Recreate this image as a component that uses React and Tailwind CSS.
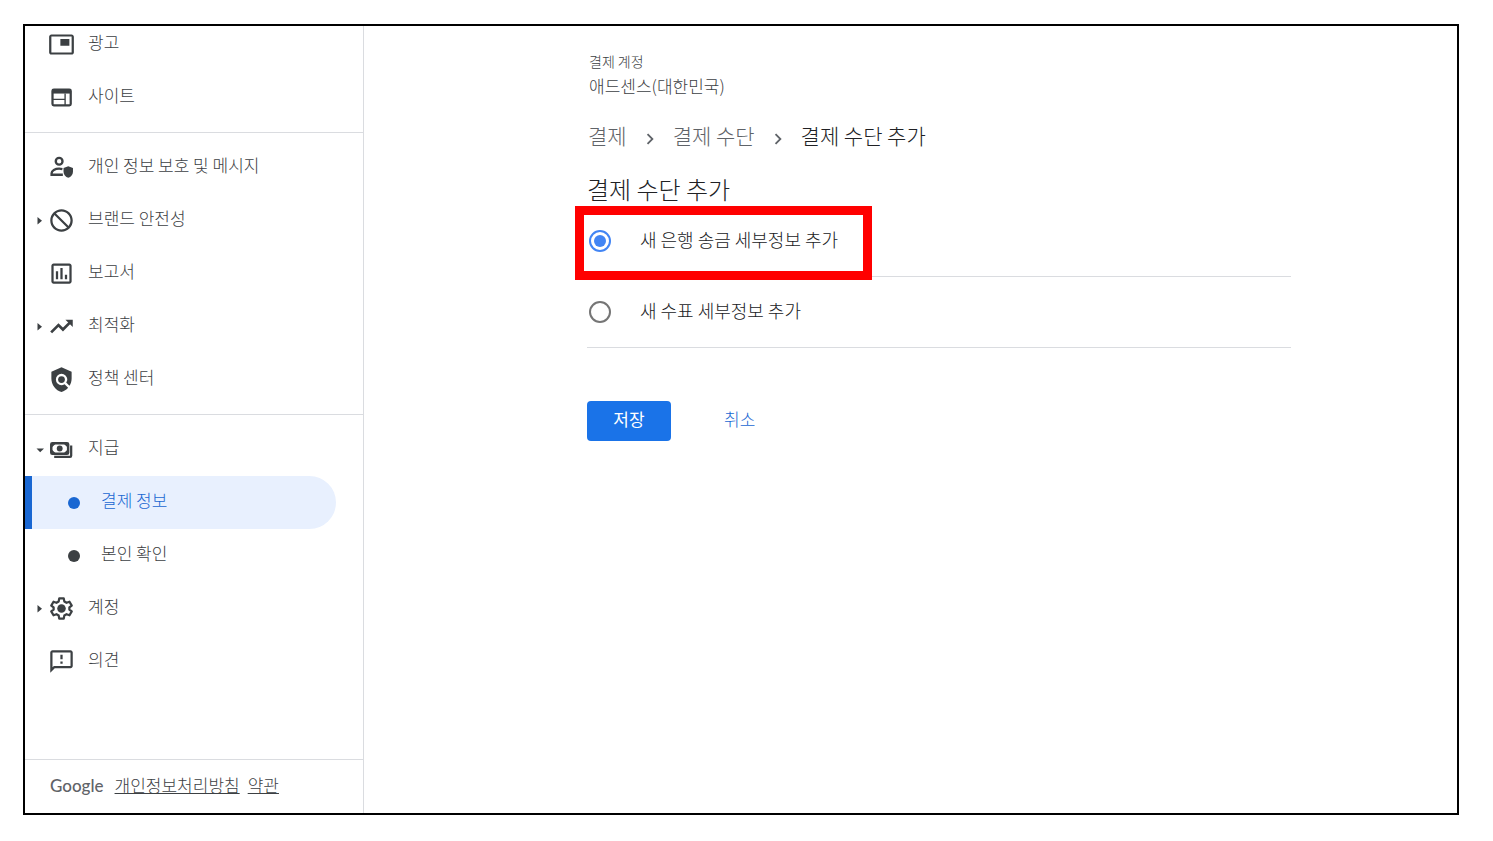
import { useState } from "react";
import {
  MdPictureInPicture,
  MdBlock,
  MdOutlineAssessment,
  MdPolicy,
  MdOutlineFeedback,
  MdChevronRight,
} from "react-icons/md";

function SitesIcon() {
  return (
    <svg viewBox="0 0 24 24" className="size-[27px]" fill="none" stroke="currentColor">
      <rect x="4" y="5" width="16.200" height="14" rx="1.200" strokeWidth="2" />
      <path d="M3.500 5h17v3.500h-17z" fill="currentColor" stroke="none" />
      <path d="M4 13.700h11M15.200 8.500v10.500" strokeWidth="1.200" />
    </svg>
  );
}

function PrivacyIcon() {
  return (
    <svg viewBox="0 0 24 24" className="size-[27px]" fill="none" stroke="currentColor">
      <circle cx="9.900" cy="6.500" r="3" strokeWidth="2.100" />
      <path d="M12.800 13.400c-.9-.2-1.800-.4-2.900-.4-3.600 0-6.700 1.700-6.700 4v1.400h10" strokeWidth="2.100" />
      <path d="M18 10.800l4.200 1.700v3.300c0 2.500-1.800 4.700-4.200 5.300-2.400-.6-4.200-2.800-4.200-5.300v-3.300z" fill="currentColor" stroke="none" />
    </svg>
  );
}

function TrendingIcon() {
  return (
    <svg viewBox="0 0 24 24" className="size-[27px]" fill="none" stroke="currentColor" strokeWidth="2.400">
      <path d="M2.800 17.200l6.500-6.500 4 4 7-7" />
      <path d="M15.500 6H22v6.500z" fill="currentColor" stroke="none" />
    </svg>
  );
}

function PaymentsIcon() {
  return (
    <svg viewBox="0 0 24 24" className="size-[27px]" fill="none" stroke="currentColor">
      <rect x="2.900" y="6.400" width="15" height="9.400" rx="1" strokeWidth="2.200" />
      <path d="M2.900 9.400l3-3M14.900 6.400l3 3M17.900 12.800l-3 3M5.900 15.800l-3-3" strokeWidth="1.800" />
      <circle cx="10.400" cy="11.100" r="2.600" fill="currentColor" stroke="none" />
      <path d="M20.600 8.500v9a1 1 0 0 1-1 1H5.500" strokeWidth="2" />
    </svg>
  );
}

function SettingsIcon() {
  return (
    <svg viewBox="0 0 24 24" className="size-[27px]" fill="none" stroke="currentColor" strokeWidth="2" strokeLinejoin="round">
      <path d="M10 3h4l.5 2.700 2 1.200 2.600-.9 2 3.400-2.100 1.700v1.800l2.100 1.700-2 3.400-2.600-.9-2 1.200L14 21h-4l-.5-2.700-2-1.200-2.600.9-2-3.400L5 12.900v-1.800L2.900 9.400l2-3.400 2.600.9 2-1.200z" />
      <circle cx="12" cy="12" r="3.800" fill="currentColor" stroke="none" />
    </svg>
  );
}

const groups = [
  [
    { label: "광고", icon: <MdPictureInPicture size={27} /> },
    { label: "사이트", icon: <SitesIcon /> },
  ],
  [
    { label: "개인 정보 보호 및 메시지", icon: <PrivacyIcon /> },
    { label: "브랜드 안전성", icon: <MdBlock size={27} className="-scale-x-100" />, arrow: "right" },
    { label: "보고서", icon: <MdOutlineAssessment size={27} /> },
    { label: "최적화", icon: <TrendingIcon />, arrow: "right" },
    { label: "정책 센터", icon: <MdPolicy size={27} /> },
  ],
  [
    { label: "지급", icon: <PaymentsIcon />, arrow: "down" },
    { label: "결제 정보", child: true, active: true },
    { label: "본인 확인", child: true },
    { label: "계정", icon: <SettingsIcon />, arrow: "right" },
    { label: "의견", icon: <MdOutlineFeedback size={27} /> },
  ],
];

const methods = [
  { id: "bank", label: "새 은행 송금 세부정보 추가" },
  { id: "check", label: "새 수표 세부정보 추가" },
];

function Arrow({ direction }) {
  return (
    <svg viewBox="0 0 8 8" className="size-2" fill="currentColor">
      {direction === "right" && <path d="M1.500 0v7.500L6 3.700z" />}
      {direction === "down" && <path d="M0.500 2.500H8L4.200 6.300z" />}
    </svg>
  );
}

function NavItem({ item }) {
  if (item.child) {
    return (
      <a
        href="#"
        className={
          item.active
            ? "mr-[27px] flex h-[53px] items-center rounded-r-full border-l-[7px] border-[#1967d2] bg-[#e8f0fe] pl-9 text-[#1967d2]"
            : "flex h-[53px] items-center pl-[43px]"
        }
      >
        <span className="size-3 rounded-full bg-current" />
        <span className="ml-[21px] pb-1.5">{item.label}</span>
      </a>
    );
  }

  return (
    <a href="#" className="flex h-[53px] items-center pl-[11px]">
      <span className="w-3">
        <Arrow direction={item.arrow} />
      </span>
      {item.icon}
      <span className="ml-[13px] pb-1.5">{item.label}</span>
    </a>
  );
}

export default function App() {
  const [method, setMethod] = useState("bank");

  return (
    <div className="h-screen bg-white pt-6 pr-[34px] pb-[26px] pl-[23px] font-['Noto_Sans_CJK_KR',sans-serif] font-light text-[#3c4043]">
      <div className="flex h-full overflow-hidden border-2 border-black">
        {/* Sidebar */}
        <aside className="flex w-[339px] shrink-0 flex-col border-r border-[#dadce0] text-[17px] leading-6">
          <nav className="-mt-4 flex-1">
            {groups.map((items, i) => (
              <div key={i} className="border-b border-[#dadce0] py-2 last:border-b-0">
                {items.map((item) => (
                  <NavItem key={item.label} item={item} />
                ))}
              </div>
            ))}
          </nav>

          <footer className="flex h-[54px] items-center border-t border-[#dadce0] pb-1 pl-[25px]">
            <span className="pt-0.5 font-[Lato] font-medium text-[#5f6368]">Google</span>
            <a href="#" className="ml-[11px] underline underline-offset-1">개인정보처리방침</a>
            <a href="#" className="ml-2 underline underline-offset-1">약관</a>
          </footer>
        </aside>

        {/* Payment method form */}
        <main className="min-w-0 flex-1 pt-[25px] pr-[166px] pl-[223px]">
          <div className="pl-0.5">
            <p className="text-sm leading-5">결제 계정</p>
            <p className="text-[17px] leading-[30px]">애드센스(대한민국)</p>
          </div>

          <nav className="mt-[18px] flex items-center pl-px text-[21px] leading-8">
            <a href="#" className="text-[#5f6368]">결제</a>
            <MdChevronRight size={22} className="mx-3 mt-2 text-[#5f6368]" />
            <a href="#" className="text-[#5f6368]">결제 수단</a>
            <MdChevronRight size={22} className="mx-3 mt-2 text-[#5f6368]" />
            <span className="text-[#202124]">결제 수단 추가</span>
          </nav>

          <form onSubmit={(e) => e.preventDefault()}>
            <h1 className="mt-[22px] mb-px text-2xl leading-8 text-[#202124]">결제 수단 추가</h1>

            {methods.map((m) => (
              <div key={m.id} className="relative h-[71px] border-b border-[#dadce0]">
                <label className="flex h-full items-center text-[18px] text-[#202124]">
                  <input
                    type="radio"
                    name="method"
                    checked={method === m.id}
                    onChange={() => setMethod(m.id)}
                    className="ml-0.5 grid size-[22px] appearance-none place-items-center rounded-full border-2 border-[#757575] before:size-3 before:rounded-full checked:border-[#4285f4] checked:before:bg-[#4285f4]"
                  />
                  <span className="ml-[29px] pb-1">{m.label}</span>
                </label>
                {/* Highlight box */}
                {m.id === "bank" && (
                  <div className="pointer-events-none absolute top-0 -left-3 h-[74px] w-[297px] border-[9px] border-[#ff0000]" />
                )}
              </div>
            ))}

            <div className="mt-[53px] flex items-center text-[17px]">
              <button type="submit" className="h-10 w-[84px] rounded bg-[#1a73e8] pb-1 font-normal text-white">
                저장
              </button>
              <button type="button" className="ml-[53px] pb-1 text-[#1967d2]">
                취소
              </button>
            </div>
          </form>
        </main>
      </div>
    </div>
  );
}
